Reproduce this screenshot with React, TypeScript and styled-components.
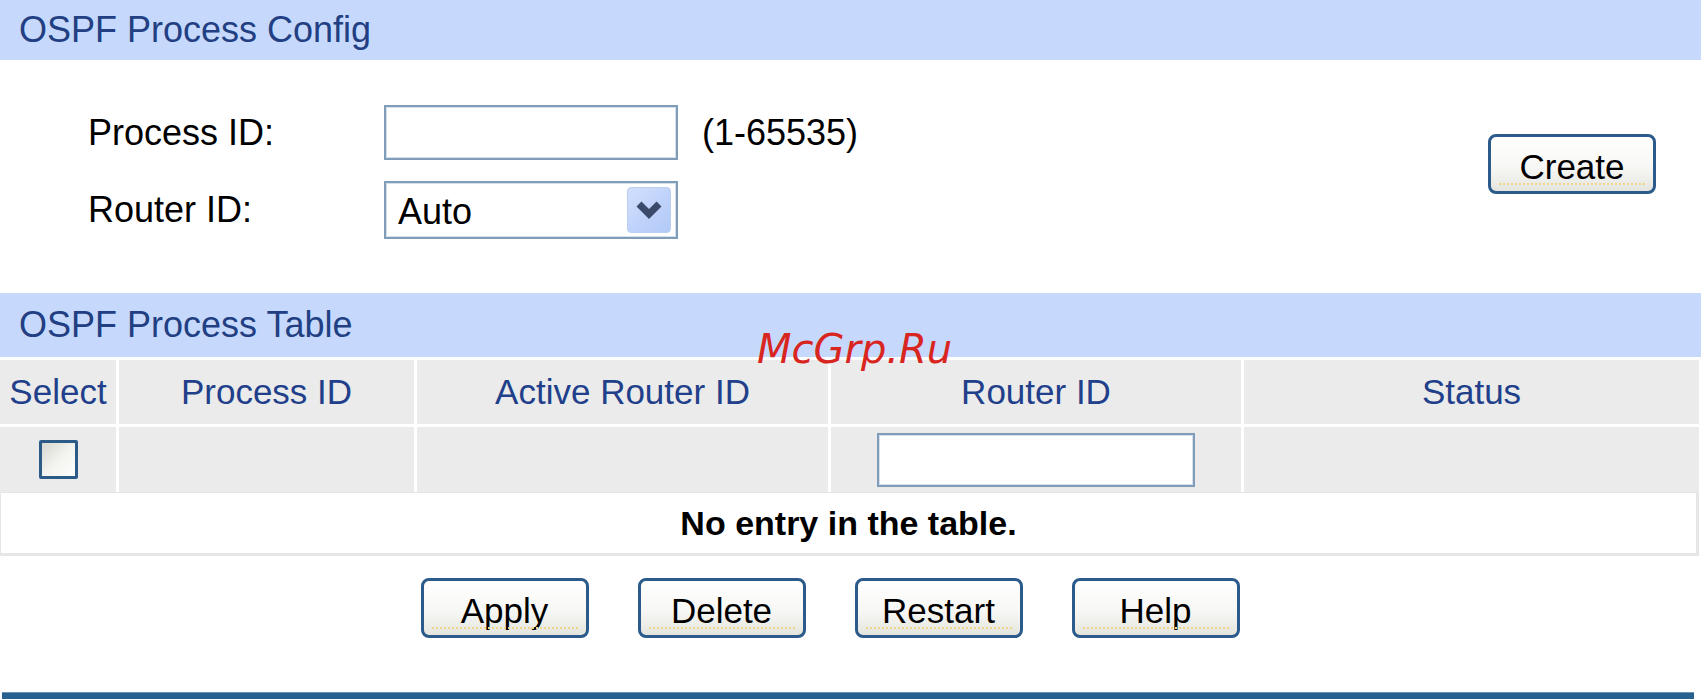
import React from 'react';
import styled, { createGlobalStyle } from 'styled-components';

const GlobalStyle = createGlobalStyle`
  html, body {
    margin: 0;
    padding: 0;
    background: #ffffff;
  }
  body {
    font-family: 'Liberation Sans', Arial, sans-serif;
    color: #000000;
  }
`;

const Page = styled.div`
  position: relative;
  width: 1701px;
  height: 699px;
  overflow: hidden;
  display: flex;
  flex-direction: column;
`;

const SectionBar = styled.div<{ $height: number }>`
  flex: none;
  height: ${(p) => p.$height}px;
  line-height: ${(p) => p.$height}px;
  padding-left: 19px;
  background: #c6d9fd;
  color: #213f82;
  font-size: 36px;
  white-space: nowrap;
`;

const ConfigArea = styled.div`
  flex: none;
  height: 233px;
  box-sizing: border-box;
  padding: 45px 45px 0 88px;
  display: flex;
  justify-content: space-between;
  align-items: flex-start;
`;

const FormGrid = styled.div`
  display: grid;
  grid-template-columns: 296px auto auto;
  grid-template-rows: 55px 58px;
  row-gap: 21px;
  align-items: center;
`;

const Label = styled.span`
  font-size: 36px;
  white-space: nowrap;
`;

const Hint = styled.span`
  font-size: 36px;
  margin-left: 24px;
  white-space: nowrap;
`;

const TextInput = styled.input<{ $width: number; $height: number }>`
  width: ${(p) => p.$width}px;
  height: ${(p) => p.$height}px;
  box-sizing: border-box;
  margin: 0;
  padding: 0 10px;
  border: 2px solid #7f9db9;
  box-shadow: inset 0 0 0 1px #d5e0ec;
  background: #ffffff;
  font-family: inherit;
  font-size: 34px;
  outline: none;
`;

const SelectBox = styled.div`
  width: 294px;
  height: 58px;
  box-sizing: border-box;
  border: 2px solid #7f9db9;
  box-shadow: inset 0 0 0 1px #d5e0ec;
  background: #ffffff;
  display: flex;
  align-items: center;
  justify-content: space-between;
  padding: 0 5px 0 12px;
  font-size: 36px;
`;

const SelectValue = styled.span`
  padding-top: 4px;
`;

const ArrowBox = styled.span`
  width: 44px;
  height: 46px;
  box-sizing: border-box;
  border: 1px solid #bccdf2;
  border-radius: 4px;
  background: linear-gradient(135deg, #d3e0fc 0%, #c0d3fa 50%, #b2c9f7 100%);
  display: flex;
  align-items: center;
  justify-content: center;
`;

const Button = styled.button`
  position: relative;
  flex: none;
  width: 168px;
  height: 60px;
  box-sizing: border-box;
  margin: 0;
  padding: 6px 0 0;
  border: 3px solid #2b5b8b;
  border-radius: 8px;
  background: linear-gradient(#ffffff 0%, #f7f7f5 55%, #e5e5df 100%);
  font-family: inherit;
  font-size: 35px;
  color: #000000;
  cursor: pointer;

  &::after {
    content: '';
    position: absolute;
    left: 8px;
    right: 8px;
    bottom: 6px;
    border-bottom: 2px dotted #f0d48a;
  }
`;

const CreateButton = styled(Button)`
  margin-top: 29px;
`;

const TableGrid = styled.div`
  flex: none;
  margin-top: 3px;
  width: 1699px;
  display: grid;
  grid-template-columns: 116px 295px 411px 410px 455px;
  grid-template-rows: 64px 65px;
  gap: 3px;
`;

const HeadCell = styled.div`
  background: #ebebeb;
  color: #213f8a;
  font-size: 35px;
  display: flex;
  align-items: center;
  justify-content: center;
  white-space: nowrap;
`;

const BodyCell = styled.div`
  background: #ebebeb;
  display: flex;
  align-items: center;
  justify-content: center;
`;

const Checkbox = styled.span`
  width: 39px;
  height: 39px;
  box-sizing: border-box;
  border: 3px solid #2d5b87;
  border-radius: 2px;
  background: linear-gradient(135deg, #d8d8d2 0%, #f2f2ee 50%, #ffffff 100%);
`;

const EmptyRow = styled.div`
  flex: none;
  width: 1699px;
  height: 64px;
  box-sizing: border-box;
  border: 3px solid #e6e6e6;
  border-top-width: 1px;
  border-left-width: 1px;
  background: #ffffff;
  display: flex;
  align-items: center;
  justify-content: center;
  font-size: 34px;
  font-weight: bold;
`;

const ActionBar = styled.div`
  flex: none;
  margin-top: 22px;
  padding-right: 41px;
  display: flex;
  justify-content: center;
  gap: 49px;
`;

const FooterBar = styled.div`
  flex: none;
  margin: 54px 7px 0 2px;
  height: 7px;
  background: #27618f;
  border-top: 1px solid #6a93b8;
`;

const Watermark = styled.span`
  position: absolute;
  left: 757px;
  top: 329px;
  font-family: 'DejaVu Sans', sans-serif;
  font-style: italic;
  font-size: 40px;
  line-height: 1;
  color: #d9251f;
  pointer-events: none;
`;

const ChevronIcon = () => (
  <svg width="28" height="20" viewBox="0 0 28 20">
    <polyline
      points="4,4 14,14 24,4"
      fill="none"
      stroke="#3b4a6b"
      strokeWidth="7"
      strokeLinejoin="miter"
    />
  </svg>
);

const COLUMNS = ['Select', 'Process ID', 'Active Router ID', 'Router ID', 'Status'];
const ACTIONS = ['Apply', 'Delete', 'Restart', 'Help'];

const ProcessConfig = () => (
  <ConfigArea>
    <FormGrid>
      <Label>Process ID:</Label>
      <TextInput $width={294} $height={55} />
      <Hint>(1-65535)</Hint>
      <Label>Router ID:</Label>
      <SelectBox>
        <SelectValue>Auto</SelectValue>
        <ArrowBox>
          <ChevronIcon />
        </ArrowBox>
      </SelectBox>
    </FormGrid>
    <CreateButton>Create</CreateButton>
  </ConfigArea>
);

const ProcessTable = () => (
  <>
    <TableGrid>
      {COLUMNS.map((col) => (
        <HeadCell key={col}>{col}</HeadCell>
      ))}
      <BodyCell>
        <Checkbox />
      </BodyCell>
      <BodyCell />
      <BodyCell />
      <BodyCell>
        <TextInput $width={318} $height={54} />
      </BodyCell>
      <BodyCell />
    </TableGrid>
    <EmptyRow>No entry in the table.</EmptyRow>
  </>
);

const App = () => (
  <Page>
    <GlobalStyle />
    <SectionBar $height={60}>OSPF Process Config</SectionBar>
    <ProcessConfig />
    <SectionBar $height={64}>OSPF Process Table</SectionBar>
    <ProcessTable />
    <ActionBar>
      {ACTIONS.map((label) => (
        <Button key={label}>{label}</Button>
      ))}
    </ActionBar>
    <FooterBar />
    <Watermark>McGrp.Ru</Watermark>
  </Page>
);

export default App;
